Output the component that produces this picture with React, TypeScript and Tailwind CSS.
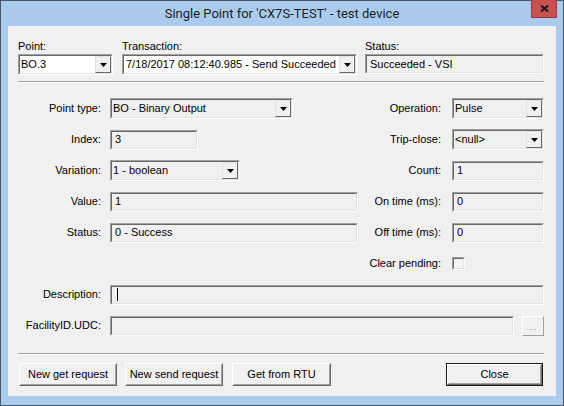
import React from "react";

// Classic Win32 dialog bevels
const Sunken = ({
  className = "",
  inner = "",
  children,
}: {
  className?: string;
  inner?: string;
  children?: React.ReactNode;
}) => (
  <div
    className={`border border-t-[#a0a0a0] border-l-[#a0a0a0] border-b-white border-r-white ${className}`}
  >
    <div
      className={`h-full w-full border border-t-[#696969] border-l-[#696969] border-b-[#e3e3e3] border-r-[#e3e3e3] flex items-center overflow-hidden ${inner}`}
    >
      {children}
    </div>
  </div>
);

const DropButton = () => (
  <div className="h-full w-[16px] shrink-0 border border-t-[#e3e3e3] border-l-[#e3e3e3] border-b-[#696969] border-r-[#696969] bg-[#f0f0f0] flex items-center justify-center">
    <svg width="7" height="4" viewBox="0 0 7 4">
      <polygon points="0,0 7,0 3.5,4" fill="#000" />
    </svg>
  </div>
);

const Combo = ({
  value,
  width,
  white = false,
  pad = "pl-[1px]",
}: {
  value: string;
  width: string;
  white?: boolean;
  pad?: string;
}) => (
  <Sunken
    className={`h-[21px] ${width}`}
    inner={white ? "bg-white" : "bg-[#f0f0f0]"}
  >
    <span className={`flex-1 overflow-hidden whitespace-nowrap ${pad}`}>{value}</span>
    <DropButton />
  </Sunken>
);

const TextBox = ({
  value,
  width,
  children,
}: {
  value?: string;
  width: string;
  children?: React.ReactNode;
}) => (
  <Sunken className={`h-[20px] ${width}`} inner="bg-[#f0f0f0]">
    <span className="pl-[3px] whitespace-nowrap">{value}</span>
    {children}
  </Sunken>
);

const Button = ({
  label,
  width,
  isDefault = false,
}: {
  label: string;
  width: string;
  isDefault?: boolean;
}) => (
  <div
    className={`h-[23px] ${width} ${isDefault ? "border border-[#1a1a1a]" : ""}`}
  >
    <div className="h-full w-full border border-t-white border-l-white border-b-[#696969] border-r-[#696969] bg-[#f0f0f0]">
      <div className="h-full w-full border border-t-[#f0f0f0] border-l-[#f0f0f0] border-b-[#a0a0a0] border-r-[#a0a0a0] flex items-center justify-center">
        {label}
      </div>
    </div>
  </div>
);

const Separator = () => (
  <div className="h-[2px] border-t border-t-[#a0a0a0] border-b border-b-white" />
);

const LeftLabel = ({ text }: { text: string }) => (
  <span className="w-[83px] shrink-0 text-right whitespace-nowrap">{text}</span>
);

const RightLabel = ({ text }: { text: string }) => (
  <span className="w-[73px] shrink-0 text-right whitespace-nowrap">{text}</span>
);

const Row = ({
  left,
  right,
}: {
  left?: React.ReactNode;
  right?: React.ReactNode;
}) => (
  <div className="flex h-[21px]">
    <div className="w-[340px] flex items-center gap-[9px]">{left}</div>
    <div className="ml-[10px] flex items-center gap-[11px]">{right}</div>
  </div>
);

export default function App() {
  return (
    <div className="relative w-[564px] h-[406px] bg-[#aacbee] border border-[#4a5664] font-['Liberation_Sans',Arial,sans-serif] text-[11px] text-black">
      {/* Title bar */}
      <div className="h-[25px] flex items-center justify-center font-['Roboto',sans-serif] text-[13px] text-[#1e1e1e]">
        Single Point for 'CX7S-TEST' - test device
      </div>
      <div className="absolute right-[6px] top-[-1px] w-[26px] h-[18px] bg-[#c75050] border-b border-x border-[#9c3a3a] flex items-center justify-center">
        <svg width="9" height="7" viewBox="0 0 9 7">
          <path d="M1 0.5 L8 6.5 M8 0.5 L1 6.5" stroke="#1a1a1a" strokeWidth="2" />
        </svg>
      </div>

      {/* Client area */}
      <div className="mx-[7px] h-[370px] bg-[#f0f0f0] pl-[10px] pr-[12px] pt-[12px]">
        {/* Top row */}
        <div className="flex">
          <div className="w-[95px] flex flex-col">
            <span className="h-[16px]">Point:</span>
            <Combo value="BO.3" width="w-[95px]" white />
          </div>
          <div className="ml-[9px] w-[235px] flex flex-col">
            <span className="h-[16px]">Transaction:</span>
            <Combo
              value="7/18/2017 08:12:40.985 - Send Succeeded"
              width="w-[235px]"
              white
              pad="pl-[2px]"
            />
          </div>
          <div className="ml-[8px] w-[179px] flex flex-col">
            <span className="h-[16px]">Status:</span>
            <TextBox value="Succeeded - VSI" width="w-[179px]" />
          </div>
        </div>

        <div className="mt-[6px]">
          <Separator />
        </div>

        {/* Point fields */}
        <div className="mt-[15px] flex flex-col gap-[10px]">
          <Row
            left={
              <>
                <LeftLabel text="Point type:" />
                <Combo value="BO - Binary Output" width="w-[183px]" />
              </>
            }
            right={
              <>
                <RightLabel text="Operation:" />
                <Combo value="Pulse" width="w-[92px]" />
              </>
            }
          />
          <Row
            left={
              <>
                <LeftLabel text="Index:" />
                <TextBox value="3" width="w-[88px]" />
              </>
            }
            right={
              <>
                <RightLabel text="Trip-close:" />
                <Combo value="<null>" width="w-[92px]" />
              </>
            }
          />
          <Row
            left={
              <>
                <LeftLabel text="Variation:" />
                <Combo value="1 - boolean" width="w-[130px]" />
              </>
            }
            right={
              <>
                <RightLabel text="Count:" />
                <TextBox value="1" width="w-[92px]" />
              </>
            }
          />
          <Row
            left={
              <>
                <LeftLabel text="Value:" />
                <TextBox value="1" width="w-[248px]" />
              </>
            }
            right={
              <>
                <RightLabel text="On time (ms):" />
                <TextBox value="0" width="w-[92px]" />
              </>
            }
          />
          <Row
            left={
              <>
                <LeftLabel text="Status:" />
                <TextBox value="0 - Success" width="w-[248px]" />
              </>
            }
            right={
              <>
                <RightLabel text="Off time (ms):" />
                <TextBox value="0" width="w-[92px]" />
              </>
            }
          />
          <Row
            right={
              <>
                <RightLabel text="Clear pending:" />
                <Sunken className="w-[13px] h-[13px]" inner="bg-[#f4f4f4]" />
              </>
            }
          />
          <div className="flex h-[21px] items-center gap-[9px]">
            <LeftLabel text="Description:" />
            <TextBox width="flex-1">
              <div className="ml-[2px] w-[1px] h-[13px] bg-black" />
            </TextBox>
          </div>
          <div className="flex h-[21px] items-center">
            <LeftLabel text="FacilityID.UDC:" />
            <TextBox width="ml-[9px] flex-1" />
            <div className="ml-[8px] w-[22px] h-[20px] border border-t-white border-l-white border-b-[#a0a0a0] border-r-[#a0a0a0] flex items-center justify-center text-[#a0a0a0] text-[9px] leading-none pt-[3px]">
              ...
            </div>
          </div>
        </div>

        <div className="mt-[17px]">
          <Separator />
        </div>

        {/* Buttons */}
        <div className="mt-[8px] flex">
          <div className="ml-[1px]">
            <Button label="New get request" width="w-[98px]" />
          </div>
          <div className="ml-[8px]">
            <Button label="New send request" width="w-[98px]" />
          </div>
          <div className="ml-[9px]">
            <Button label="Get from RTU" width="w-[99px]" />
          </div>
          <div className="ml-auto mr-[1px]">
            <Button label="Close" width="w-[97px]" isDefault />
          </div>
        </div>
      </div>
    </div>
  );
}
